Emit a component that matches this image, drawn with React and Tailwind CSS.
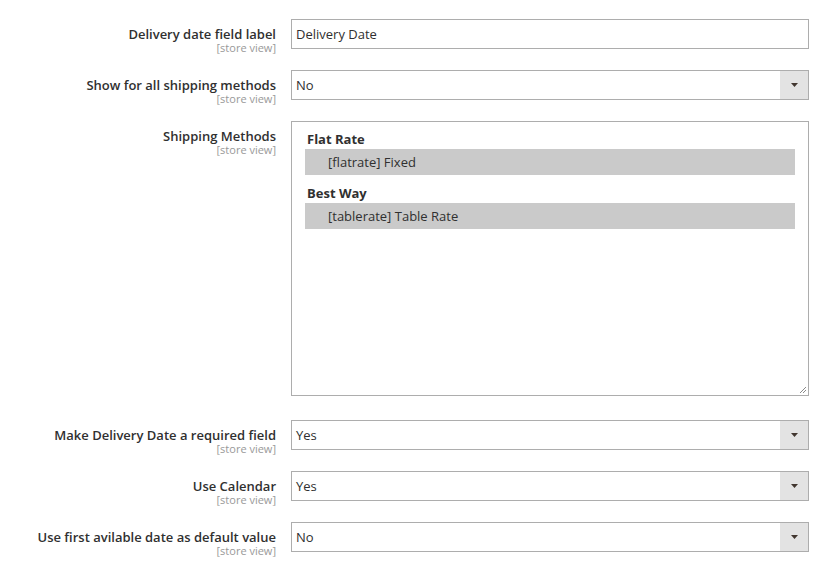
import React from 'react';

const FONT = { fontFamily: '"Open Sans", "Noto Sans", sans-serif' };

const GROUPS = [
  { label: 'Flat Rate', option: '[flatrate] Fixed', pad: 'pt-[7px]' },
  { label: 'Best Way', option: '[tablerate] Table Rate', pad: 'pt-[8px]' },
];

function Label({ text }) {
  return (
    <div className="w-[277px] shrink-0 pt-[8px] pr-px text-right">
      <div className="text-[13px] leading-[14px] font-semibold text-[#303030]">{text}</div>
      <div className="text-[11px] leading-[13px] text-[#999999]">[store view]</div>
    </div>
  );
}

function Select({ value }) {
  return (
    <div className="flex h-[30px] w-[518px] border border-[#adadad] bg-white">
      <div className="flex-1 pl-[4px] text-[13px] leading-[28px] text-[#303030]">{value}</div>
      <div className="flex w-[28px] items-center justify-center bg-[#e3e3e3]">
        <svg width="7" height="4" viewBox="0 0 7 4">
          <path d="M0 0h7L3.5 4z" fill="#41362f" />
        </svg>
      </div>
    </div>
  );
}

function Row({ label, children, className = 'h-[30px] mt-[21px]' }) {
  return (
    <div className={`flex items-start gap-[14px] ${className}`}>
      <Label text={label} />
      {children}
    </div>
  );
}

export default function App() {
  return (
    <div className="min-h-[572px] w-[821px] bg-white pt-[19px]" style={FONT}>
      <Row label="Delivery date field label" className="h-[30px]">
        <div className="h-[30px] w-[518px] border border-[#adadad] bg-white pl-[4px] text-[13px] leading-[28px] text-[#303030]">
          Delivery Date
        </div>
      </Row>

      <Row label="Show for all shipping methods">
        <Select value="No" />
      </Row>

      <Row label="Shipping Methods" className="h-[275px] mt-[21px]">
        <div className="relative h-[275px] w-[518px] border border-[#adadad] bg-white px-[13px]">
          {GROUPS.map((g) => (
            <div key={g.label} className={g.pad}>
              <div className="pl-[2px] text-[13px] leading-[20px] font-bold text-[#303030]">{g.label}</div>
              <div className="h-[26px] bg-[#cacaca] pl-[23px] text-[13px] leading-[26px] text-[#303030]">
                {g.option}
              </div>
            </div>
          ))}
          <svg className="absolute bottom-[1px] right-[1px]" width="8" height="8" viewBox="0 0 8 8">
            <path d="M7 1L1 7M7 4L4 7" stroke="#8a8a8a" strokeWidth="1" />
          </svg>
        </div>
      </Row>

      <Row label="Make Delivery Date a required field" className="h-[30px] mt-[24px]">
        <Select value="Yes" />
      </Row>

      <Row label="Use Calendar">
        <Select value="Yes" />
      </Row>

      <Row label="Use first avilable date as default value">
        <Select value="No" />
      </Row>
    </div>
  );
}
